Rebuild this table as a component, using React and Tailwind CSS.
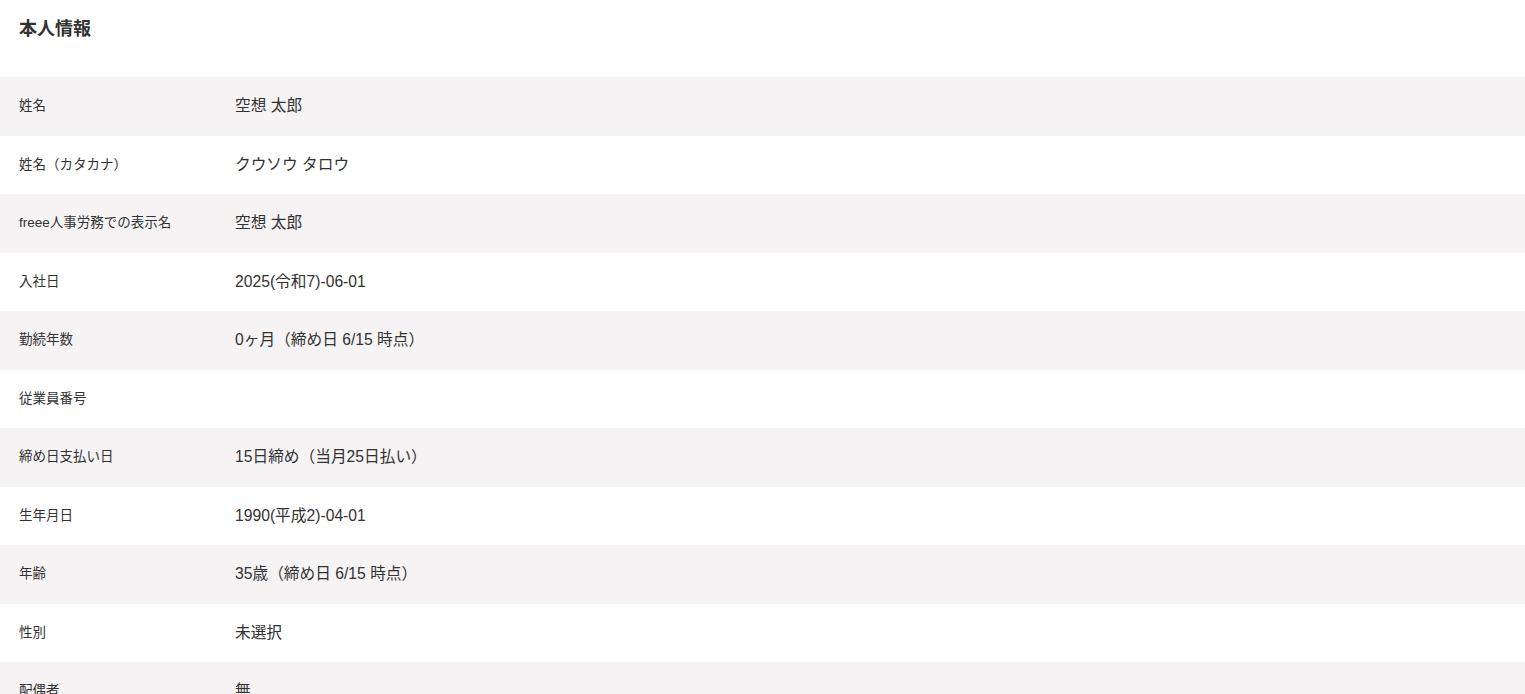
import React from "react";

const rows = [
  ["姓名", "空想 太郎"],
  ["姓名（カタカナ）", "クウソウ タロウ"],
  ["freee人事労務での表示名", "空想 太郎"],
  ["入社日", "2025(令和7)-06-01"],
  ["勤続年数", "0ヶ月（締め日 6/15 時点）"],
  ["従業員番号", ""],
  ["締め日支払い日", "15日締め（当月25日払い）"],
  ["生年月日", "1990(平成2)-04-01"],
  ["年齢", "35歳（締め日 6/15 時点）"],
  ["性別", "未選択"],
  ["配偶者", "無"],
];

export default function App() {
  return (
    <div
      className="w-full h-[694px] overflow-hidden bg-white text-[#323232]"
      style={{ fontFamily: '"Liberation Sans", "Noto Sans CJK JP", sans-serif' }}
    >
      <div className="pl-[19px] pt-[17px] pb-[36px]">
        <h1 className="text-[18px] leading-[24px] font-bold">本人情報</h1>
      </div>
      <div className="flex flex-col">
        {rows.map(([label, value], i) => (
          <div
            key={i}
            className={`flex items-center h-[58.5px] shrink-0 pl-[19px] ${
              i % 2 === 0 ? "bg-[#f5f3f4]" : "bg-white"
            }`}
          >
            <div className="w-[216px] text-[13.5px] leading-[20px]">{label}</div>
            <div className="text-[15.7px] leading-[22px]">{value}</div>
          </div>
        ))}
      </div>
    </div>
  );
}
